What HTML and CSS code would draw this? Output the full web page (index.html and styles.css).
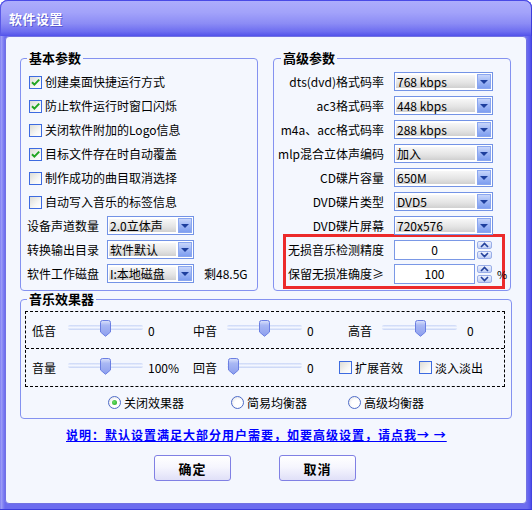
FILE: index.html
```html
<!DOCTYPE html>
<html lang="zh-CN">
<head>
<meta charset="utf-8">
<title>软件设置</title>
<link rel="stylesheet" href="styles.css">
</head>
<body>
<div class="window">
  <div class="titlebar"><span class="title">软件设置</span></div>
  <div class="panel">
    <div class="top">
      <fieldset class="group basic">
        <legend>基本参数</legend>
        <div class="row"><span class="cb"><svg viewBox="0 0 11 11" width="11" height="11"><path d="M2 5.2 L4.4 7.6 L9.2 2.6" fill="none" stroke="#22a522" stroke-width="2"/></svg></span>创建桌面快捷运行方式</div>
        <div class="row"><span class="cb"><svg viewBox="0 0 11 11" width="11" height="11"><path d="M2 5.2 L4.4 7.6 L9.2 2.6" fill="none" stroke="#22a522" stroke-width="2"/></svg></span>防止软件运行时窗口闪烁</div>
        <div class="row"><span class="cb"></span>关闭软件附加的Logo信息</div>
        <div class="row"><span class="cb"><svg viewBox="0 0 11 11" width="11" height="11"><path d="M2 5.2 L4.4 7.6 L9.2 2.6" fill="none" stroke="#22a522" stroke-width="2"/></svg></span>目标文件存在时自动覆盖</div>
        <div class="row"><span class="cb"></span>制作成功的曲目取消选择</div>
        <div class="row"><span class="cb"></span>自动写入音乐的标签信息</div>
        <div class="row srow"><span class="lbl">设备声道数量</span><div class="select sm"><span class="sel-text">2.0立体声</span><span class="sel-btn"></span></div></div>
        <div class="row srow"><span class="lbl">转换输出目录</span><div class="select sm"><span class="sel-text">软件默认</span><span class="sel-btn"></span></div></div>
        <div class="row srow"><span class="lbl">软件工作磁盘</span><div class="select sm"><span class="sel-text">I:本地磁盘</span><span class="sel-btn"></span></div><span class="free">剩48.5G</span></div>
      </fieldset>
      <fieldset class="group adv">
        <legend>高级参数</legend>
        <div class="row"><span class="rlbl">dts(dvd)格式码率</span><div class="select lg"><span class="sel-text">768 kbps</span><span class="sel-btn"></span></div></div>
        <div class="row"><span class="rlbl">ac3格式码率</span><div class="select lg"><span class="sel-text">448 kbps</span><span class="sel-btn"></span></div></div>
        <div class="row"><span class="rlbl">m4a、acc格式码率</span><div class="select lg"><span class="sel-text">288 kbps</span><span class="sel-btn"></span></div></div>
        <div class="row"><span class="rlbl">mlp混合立体声编码</span><div class="select lg"><span class="sel-text">加入</span><span class="sel-btn"></span></div></div>
        <div class="row"><span class="rlbl">CD碟片容量</span><div class="select lg"><span class="sel-text">650M</span><span class="sel-btn"></span></div></div>
        <div class="row"><span class="rlbl">DVD碟片类型</span><div class="select lg"><span class="sel-text">DVD5</span><span class="sel-btn"></span></div></div>
        <div class="row"><span class="rlbl">DVD碟片屏幕</span><div class="select lg"><span class="sel-text">720x576</span><span class="sel-btn"></span></div></div>
        <div class="hl">
          <div class="row"><span class="rlbl in">无损音乐检测精度</span><span class="num">0</span><span class="spin"><span class="sp"><svg width="13" height="6" viewBox="0 0 13 6"><path d="M3 5 L6.5 1.5 L10 5" fill="none" stroke="#23419c" stroke-width="1.6"/></svg></span><span class="sp"><svg width="13" height="6" viewBox="0 0 13 6"><path d="M3 1 L6.5 4.5 L10 1" fill="none" stroke="#23419c" stroke-width="1.6"/></svg></span></span></div>
          <div class="row"><span class="rlbl in">保留无损准确度≥</span><span class="num">100</span><span class="spin"><span class="sp"><svg width="13" height="6" viewBox="0 0 13 6"><path d="M3 5 L6.5 1.5 L10 5" fill="none" stroke="#23419c" stroke-width="1.6"/></svg></span><span class="sp"><svg width="13" height="6" viewBox="0 0 13 6"><path d="M3 1 L6.5 4.5 L10 1" fill="none" stroke="#23419c" stroke-width="1.6"/></svg></span></span><span class="pct">%</span></div>
        </div>
      </fieldset>
    </div>

    <fieldset class="group music">
      <legend>音乐效果器</legend>
      <div class="fx">
        <div class="fx-row r1">
          <div class="cell c1"><span class="flbl w36">低音</span><span class="slider"><span class="track"></span><svg class="thumb" style="left:32px" width="11" height="17" viewBox="0 0 11 17"><defs><linearGradient id="tg" x1="0" y1="0" x2="0" y2="1"><stop offset="0" stop-color="#dde3fb"/><stop offset=".3" stop-color="#a9b8f4"/><stop offset="1" stop-color="#8c9eee"/></linearGradient></defs><path d="M.5 2.5 Q.5 .5 2.5 .5 H8.5 Q10.5 .5 10.5 2.5 V12 L5.5 16.3 L.5 12 Z" fill="url(#tg)" stroke="#6b7fe2"/></svg></span><span class="val">0</span></div>
          <div class="cell c2"><span class="flbl w34">中音</span><span class="slider"><span class="track"></span><svg class="thumb" style="left:32px" width="11" height="17" viewBox="0 0 11 17"><path d="M.5 2.5 Q.5 .5 2.5 .5 H8.5 Q10.5 .5 10.5 2.5 V12 L5.5 16.3 L.5 12 Z" fill="url(#tg)" stroke="#6b7fe2"/></svg></span><span class="val">0</span></div>
          <div class="cell"><span class="flbl w34">高音</span><span class="slider"><span class="track"></span><svg class="thumb" style="left:33px" width="11" height="17" viewBox="0 0 11 17"><path d="M.5 2.5 Q.5 .5 2.5 .5 H8.5 Q10.5 .5 10.5 2.5 V12 L5.5 16.3 L.5 12 Z" fill="url(#tg)" stroke="#6b7fe2"/></svg></span><span class="val v3">0</span></div>
        </div>
        <div class="fx-row r2">
          <div class="cell c1"><span class="flbl w36">音量</span><span class="slider"><span class="track"></span><svg class="thumb" style="left:32px" width="11" height="17" viewBox="0 0 11 17"><path d="M.5 2.5 Q.5 .5 2.5 .5 H8.5 Q10.5 .5 10.5 2.5 V12 L5.5 16.3 L.5 12 Z" fill="url(#tg)" stroke="#6b7fe2"/></svg></span><span class="val">100%</span></div>
          <div class="cell c2b"><span class="flbl w34">回音</span><span class="slider"><span class="track"></span><svg class="thumb" style="left:1px" width="11" height="17" viewBox="0 0 11 17"><path d="M.5 2.5 Q.5 .5 2.5 .5 H8.5 Q10.5 .5 10.5 2.5 V12 L5.5 16.3 L.5 12 Z" fill="url(#tg)" stroke="#6b7fe2"/></svg></span><span class="val">0</span></div>
          <div class="cell"><span class="cb"></span><span>扩展音效</span><span class="cb gapl"></span><span>淡入淡出</span></div>
        </div>
      </div>
      <div class="radios">
        <span class="ritem"><span class="radio on"></span>关闭效果器</span>
        <span class="ritem r2i"><span class="radio"></span>简易均衡器</span>
        <span class="ritem r3i"><span class="radio"></span>高级均衡器</span>
      </div>
    </fieldset>

    <div class="note"><a class="link">说明：默认设置满足大部分用户需要，如要高级设置，请点我→ →</a></div>
    <div class="buttons"><button class="btn">确定</button><button class="btn">取消</button></div>
  </div>
</div>
</body>
</html>
```

FILE: styles.css
```css
* { box-sizing: border-box; }
html, body { margin: 0; padding: 0; }
body {
  width: 532px; height: 510px; overflow: hidden;
  background: #ffffff;
  font-family: "Noto Sans CJK SC", "Liberation Sans", sans-serif;
  font-size: 12px; color: #000;
}
.window {
  width: 532px; height: 510px;
  display: flex; flex-direction: column;
  border-radius: 8px 8px 0 0;
  background: linear-gradient(to right, #6f6fee 0, #a2a2f8 1px, #8484f3 3px, #6c6cef 5px, #6c6cef 527px, #5a5aee 530px, #3c3cdc 532px);
  box-shadow: inset 0 -1px 0 #3c3cdc;
}
.titlebar {
  height: 36px; flex: none;
  border-radius: 8px 8px 0 0;
  background: linear-gradient(#aeaefc 0, #a2a2fa 35%, #8c8cf5 65%, #6d6df0 88%, #5252ea 100%);
  box-shadow: inset 0 1px 0 #4a4ae6, inset 1px 0 0 #5a5ae8, inset -1px 0 0 #3c3cdc;
  padding: 10px 0 0 9px;
}
.title {
  color: #fff; font-weight: bold; font-size: 13px; line-height: 17px;
  letter-spacing: 0.5px;
  text-shadow: 1px 1px 0 #5a5ad0;
}
.panel {
  margin: 0 5px; height: 468px; flex: none;
  background: #f4f7fe;
  border: 1px solid #7272e2; border-radius: 4px;
  padding: 13px 0 0 14px;
}
.top {
  display: grid;
  grid-template-columns: 238px 238px;
  grid-template-rows: 241px;
  column-gap: 15px;
}
fieldset.group {
  margin: 0; min-width: 0;
  border: 1px solid #8492f0; border-radius: 4px;
  padding: 4px 0 0 8px;
}
fieldset.group legend {
  font-size: 13px; font-weight: bold; line-height: 16px;
  padding: 0 2px; margin-left: -2px;
}
.adv { padding-left: 1px !important; }
.adv legend { margin-left: 6px !important; }

.row { display: flex; align-items: center; height: 24px; white-space: nowrap; line-height: 16px; }

.cb {
  width: 13px; height: 13px; flex: none;
  border: 1px solid #3d6be0;
  background: linear-gradient(135deg, #dcdcd6, #f6f6f4 60%, #ffffff);
  margin-right: 3px;
  display: inline-flex; align-items: center; justify-content: center;
}
.cb svg { display: block; }
.srow .lbl { margin-left: -2px; width: 80px; }
.free { margin-left: 10px; }

.select {
  height: 19px; flex: none;
  border: 1px solid #7393e6; background: #fff;
  display: flex; padding: 1px;
  margin-top: -1px;
}
.select.sm { width: 87px; }
.select.lg { width: 99px; }
.sel-text {
  flex: 1; margin: 1px 2px 1px 0;
  background: linear-gradient(#f7f7f7, #e4e4e4 60%, #d0d0d0);
  line-height: 13px; height: 13px; padding-left: 1px; font-size: 12px;
  white-space: nowrap;
}
.sel-btn {
  width: 14px; flex: none;
  background: linear-gradient(#c8d6fb, #9fb7f5 50%, #7e9ef0);
  border: 1px solid #8aa6f0;
  display: flex; align-items: center; justify-content: center;
}
.sel-btn::after {
  content: ""; width: 0; height: 0;
  border-left: 4px solid transparent; border-right: 4px solid transparent;
  border-top: 4px solid #1e3f9e;
}

.rlbl { width: 109px; text-align: right; margin-right: 10px; flex: none; }
.rlbl.in { width: 98px; }

.hl {
  border: 3px solid #ec2a2a;
  margin: -4px 5px 0 8px;
  padding-top: 1px;
}
.num {
  width: 81px; height: 20px; flex: none;
  border: 1px solid #7a98e6; background: #fff;
  text-align: center; line-height: 18px;
}
.spin { display: flex; flex-direction: column; gap: 2px; margin-left: 2px; }
.sp {
  width: 15px; height: 8px;
  border: 1px solid #9aaee8; border-radius: 2px;
  background: linear-gradient(#eef2fd, #c0cff6);
  display: flex; align-items: center; justify-content: center;
}
.sp svg { display: block; }
.pct { margin-left: 5px; font-size: 11px; }

.music {
  margin-top: 10px; width: 492px; height: 128px;
  padding: 4px 0 0 4px !important;
}
.music legend { margin-left: 2px !important; }
.fx { width: 480px; border: 1px dashed #000; }
.fx-row { display: flex; align-items: center; padding-left: 6px; white-space: nowrap; }
.fx-row.r1 { height: 37px; border-bottom: 1px dashed #000; }
.fx-row.r2 { height: 37px; }
.cell { display: flex; align-items: center; }
.c1 { width: 161px; }
.c2 { width: 155px; }
.c2b { width: 146px; }
.flbl { flex: none; }
.w36 { width: 36px; }
.w34 { width: 34px; }
.slider {
  position: relative; width: 75px; height: 17px; flex: none;
  margin-top: -3px;
}
.track {
  position: absolute; left: 0; right: 0; top: 5px; height: 5px;
  background: linear-gradient(#c9d6f7, #f4f7ff 50%, #c4d2f5);
  border-radius: 2px;
}
.thumb { position: absolute; top: 0; }
.val { margin-left: 5px; }
.val.v3 { margin-left: 10px; }
.gapl { margin-left: 16px; }

.radios { display: flex; align-items: center; height: 30px; padding-left: 83px; white-space: nowrap; }
.ritem { display: flex; align-items: center; }
.r2i { margin-left: 47px; }
.r3i { margin-left: 41px; }
.radio {
  width: 13px; height: 13px; border-radius: 50%; flex: none;
  border: 1px solid #4f6cc8;
  background: radial-gradient(circle at 60% 60%, #ffffff 40%, #dedee0);
  margin-right: 3px;
  display: flex; align-items: center; justify-content: center;
}
.radio.on::after {
  content: ""; width: 5px; height: 5px; border-radius: 50%;
  background: radial-gradient(circle at 40% 40%, #6ce06c, #1aa41a);
}

.note { margin-top: 8px; padding-left: 46px; height: 16px; line-height: 16px; }
.link {
  color: #0000ff; font-weight: bold; letter-spacing: 1px;
  text-decoration: underline; white-space: nowrap;
}
.buttons { display: flex; gap: 48px; margin-top: 12px; padding-left: 134px; }
.btn {
  width: 77px; height: 26px;
  border: 1px solid #8080e4; border-radius: 3px;
  background: linear-gradient(#ffffff, #f6f6fe 45%, #e0e0f8);
  font-family: "Noto Sans CJK SC", sans-serif;
  font-weight: bold; font-size: 13px; letter-spacing: 1px; color: #000;
  padding: 0;
}
```
